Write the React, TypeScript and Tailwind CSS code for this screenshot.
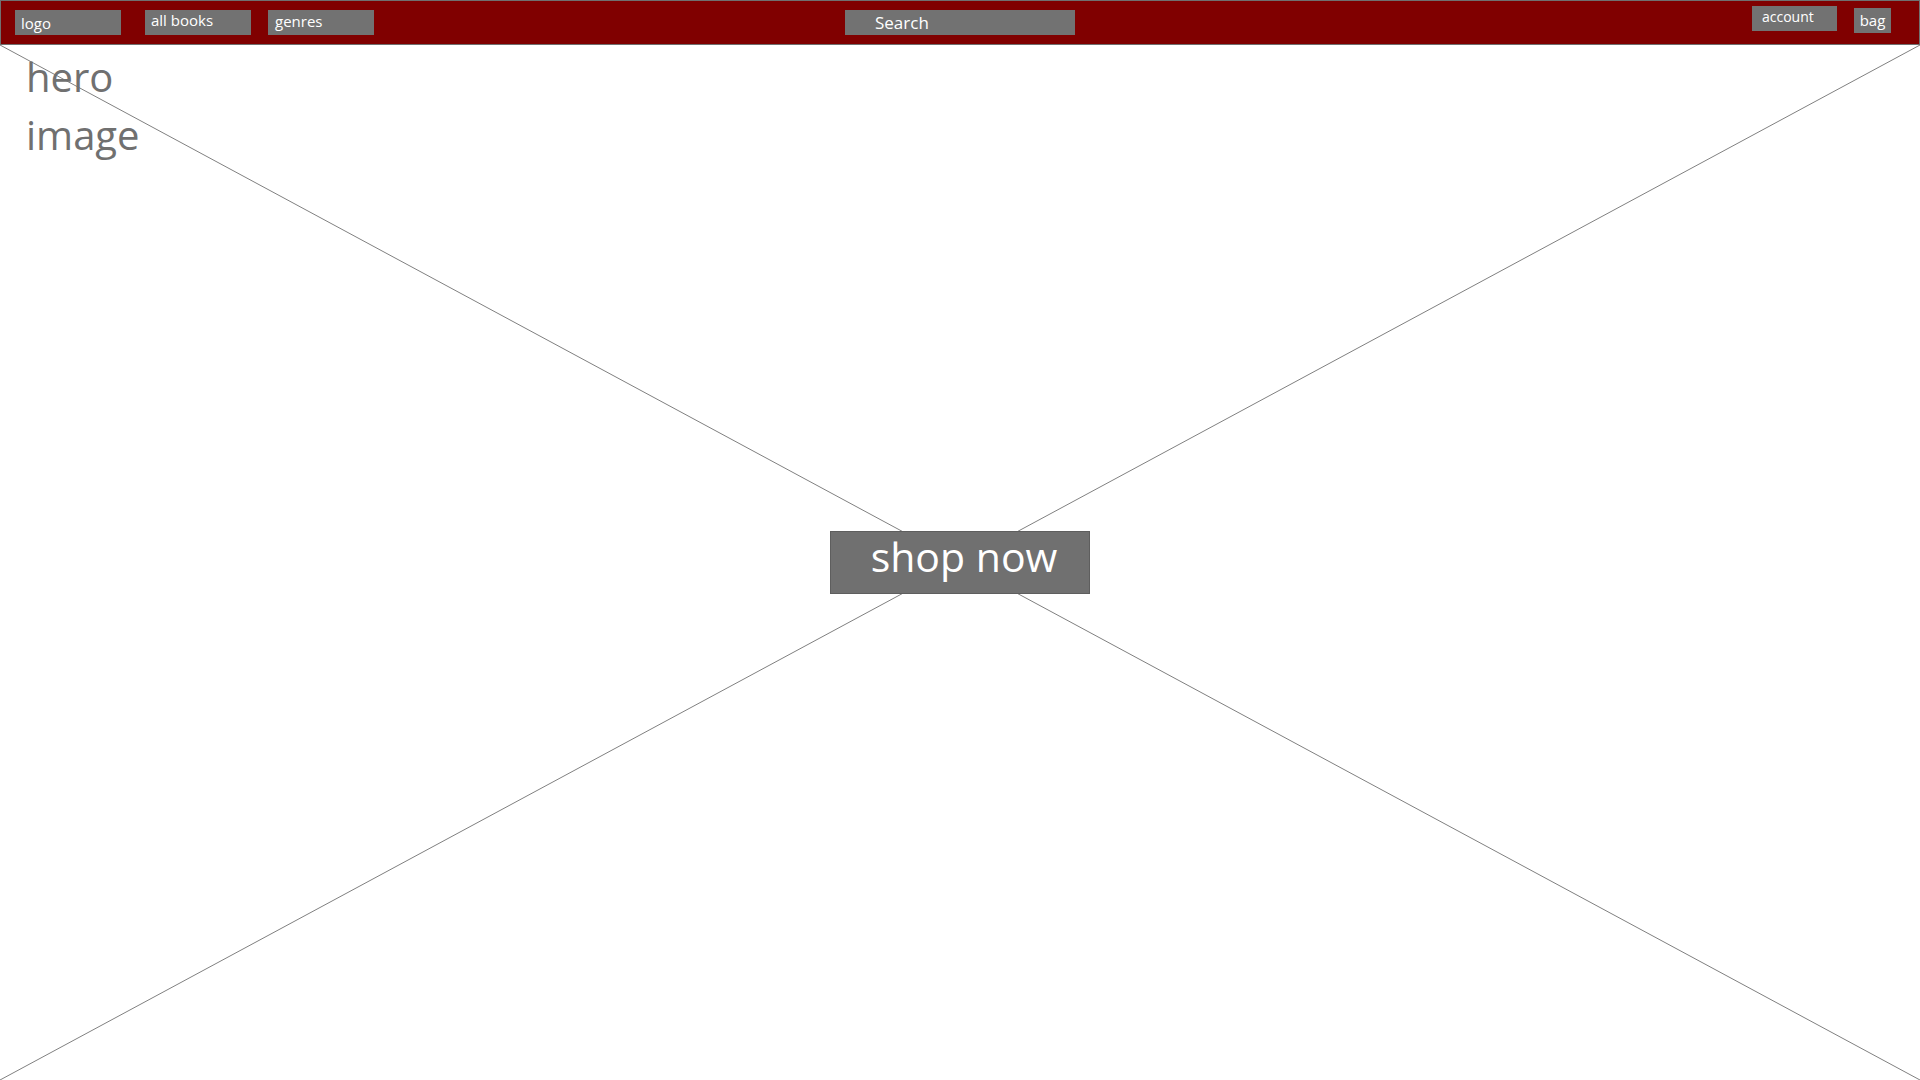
const NAV_LEFT = [
  { title: "logo", w: "w-[106px]", pad: "pl-[6px] pt-[4px]" },
  { title: "all books", w: "w-[106px]", pad: "pl-[6px] pt-[1px]" },
  { title: "genres", w: "w-[106px]", pad: "pl-[7px] pt-[2px]" },
]

function Header() {
  return (
    <header className="grid grid-cols-3 h-[45px] bg-[#800000] border border-[#707070] text-white">
      <div className="flex items-start gap-[24px] pl-[14px] pt-[9px]">
        {NAV_LEFT.map((item, i) => (
          <div
            key={item.title}
            className={`${item.w} h-[25px] bg-[#727272] text-[15px] leading-[18px] ${item.pad} ${i === 2 ? "-ml-[7px]" : ""}`}
          >
            {item.title}
          </div>
        ))}
      </div>
      <div className="flex justify-center pt-[9px]">
        <div className="w-[230px] h-[25px] bg-[#727272] pl-[30px] text-[17px] leading-[24px] pt-[1px]">
          Search
        </div>
      </div>
      <div className="flex justify-end items-start gap-[17px] pr-[28px] pt-[5px]">
        <div className="w-[85px] h-[25px] bg-[#727272] pl-[10px] text-[14px] leading-[22px]">
          account
        </div>
        <div className="w-[37px] h-[25px] mt-[2px] bg-[#727272] text-center text-[15px] leading-[24px]">
          bag
        </div>
      </div>
    </header>
  )
}

function Hero() {
  return (
    <section className="grid h-[1035px] w-full">
      <svg
        className="[grid-area:1/1] w-full h-full"
        viewBox="0 0 1920 1035"
        preserveAspectRatio="none"
      >
        <line x1="0" y1="0" x2="1920" y2="1035" stroke="#808080" strokeWidth="1" />
        <line x1="1920" y1="0" x2="0" y2="1035" stroke="#808080" strokeWidth="1" />
      </svg>
      <div className="[grid-area:1/1] self-start justify-self-start pl-[26px] pt-[3px] text-[40px] leading-[58px] text-[#707070]">
        hero
        <br />
        image
      </div>
      <div className="[grid-area:1/1] self-center justify-self-center">
        <button className="flex items-start justify-center w-[260px] h-[63px] bg-[#707070] border border-[#5e5e5e] text-white text-[41px] leading-[41px] pl-[8px] pt-[4px]">
          shop now
        </button>
      </div>
    </section>
  )
}

export default function App() {
  return (
    <div className="w-[1920px] h-[1080px] bg-white overflow-hidden font-['Open_Sans',sans-serif]">
      <Header />
      <Hero />
    </div>
  )
}
